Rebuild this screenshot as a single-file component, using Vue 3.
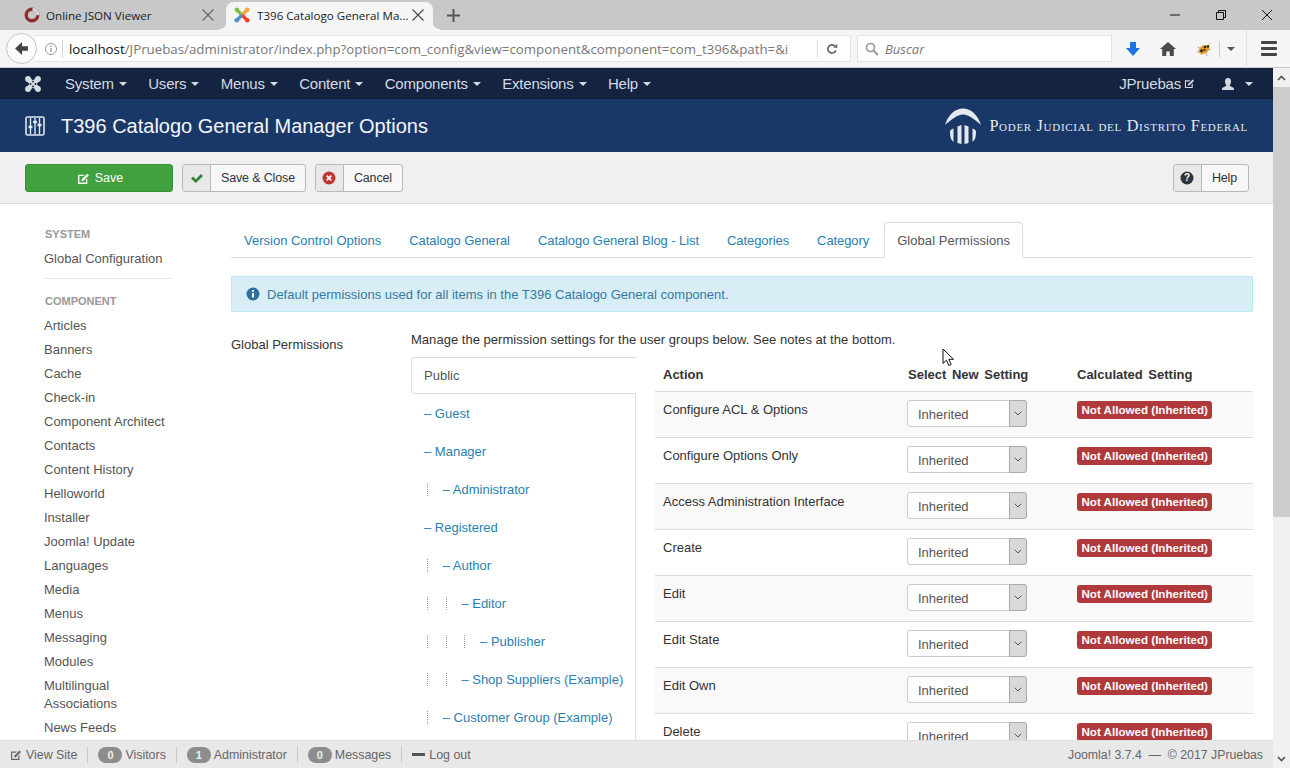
<template>
  <div class="window">
    <div class="tabstrip">
      <div class="tab">
        <svg class="favicon" viewBox="0 0 16 16"><circle cx="8" cy="8" r="5.800" fill="none" stroke="#8c2f2f" stroke-width="3.400"/><path d="M8.500 2.200a5.800 5.800 0 0 1 5.300 6" fill="none" stroke="#d6d6d6" stroke-width="3.400"/></svg>
        <span class="tab-title">Online JSON Viewer</span>
        <svg class="tab-close" viewBox="0 0 12 12"><path d="M.5.500l11 11M11.500.500l-11 11" stroke="#666" stroke-width="1.100"/></svg>
      </div>
      <div class="tab active">
        <svg class="favicon" viewBox="0 0 16 16">
          <g fill="none" stroke-width="3.200" stroke-linecap="round">
            <path d="M3 3l4 4" stroke="#7ac143"/>
            <path d="M13 3L9 7" stroke="#f9a541"/>
            <path d="M13 13L9 9" stroke="#f44321"/>
            <path d="M3 13l4-4" stroke="#5091cd"/>
          </g>
          <circle cx="2.800" cy="2.800" r="2.300" fill="#7ac143"/>
          <circle cx="13.200" cy="2.800" r="2.300" fill="#f9a541"/>
          <circle cx="13.200" cy="13.200" r="2.300" fill="#f44321"/>
          <circle cx="2.800" cy="13.200" r="2.300" fill="#5091cd"/>
        </svg>
        <span class="tab-title">T396 Catalogo General Ma...</span>
        <svg class="tab-close" viewBox="0 0 12 12"><path d="M.5.500l11 11M11.500.500l-11 11" stroke="#444" stroke-width="1.100"/></svg>
      </div>
      <svg class="newtab" viewBox="0 0 13 13"><path d="M6.500 0v13M0 6.500h13" stroke="#555" stroke-width="2"/></svg>
      <div class="winbtns">
        <svg viewBox="0 0 12 12"><path d="M1 6h10" stroke="#111" stroke-width="1"/></svg>
        <svg viewBox="0 0 12 12"><path d="M1.500 3.500h7v7h-7zM3.500 3.500v-2h7v7h-2" fill="none" stroke="#111" stroke-width="1"/></svg>
        <svg viewBox="0 0 12 12"><path d="M1 1l10 10M11 1L1 11" stroke="#111" stroke-width="1"/></svg>
      </div>
    </div>

    <div class="navbar-browser">
      <div class="backbtn">
        <svg viewBox="0 0 14 14"><path d="M7.500 1L1 7l6.500 6V9.200H13V4.800H7.500z" fill="#444"/></svg>
      </div>
      <div class="urlbar">
        <svg class="info" viewBox="0 0 14 14"><circle cx="7" cy="7" r="5.500" fill="none" stroke="#999"/><path d="M7 6v4M7 3.600v1.300" stroke="#999" stroke-width="1.300"/></svg>
        <span class="url"><b>localhost</b>/JPruebas/administrator/index.php?option=com_config&amp;view=component&amp;component=com_t396&amp;path=&amp;i</span>
        <span class="reload">
          <svg viewBox="0 0 14 14"><path d="M11.500 8.600A4.800 4.800 0 1 1 10.400 3.600" fill="none" stroke="#666" stroke-width="2"/><path d="M8.200 5.400h5V1z" fill="#666"/></svg>
        </span>
      </div>
      <div class="searchbar">
        <svg viewBox="0 0 14 14"><circle cx="5.500" cy="5.500" r="4" fill="none" stroke="#999" stroke-width="1.700"/><path d="M8.500 8.500l4.500 4.500" stroke="#999" stroke-width="2"/></svg>
        <span>Buscar</span>
      </div>
      <svg class="tb download" viewBox="0 0 16 16"><path d="M5 1h6v6h4l-7 8-7-8h4z" fill="#1b74e4"/></svg>
      <svg class="tb home" viewBox="0 0 16 16"><path d="M8 1l8 7h-2.200v7H9.700v-4.500H6.300V15H2.200V8H0z" fill="#4a4a4a"/></svg>
      <svg class="tb bug" viewBox="0 0 16 16">
        <path d="M1 6l3 1M1 11l3-1M5 14l1-2M11 15l-1-3M15 9l-3-1M14 2l-2 3" stroke="#b5b5b5" stroke-width="1"/>
        <ellipse cx="8" cy="8.500" rx="6" ry="4" transform="rotate(-30 8 8.500)" fill="#e39a2a"/>
        <circle cx="5.500" cy="9.800" r="1.500" fill="#33200f"/>
        <circle cx="8.500" cy="9" r="1.100" fill="#33200f"/>
        <circle cx="9" cy="6" r="1.300" fill="#33200f"/>
        <circle cx="12" cy="5.500" r="1.200" fill="#33200f"/>
      </svg>
      <span class="bugsep"></span>
      <span class="caret small"></span>
      <span class="hamsep"></span>
      <span class="hamburger"><i></i><i></i><i></i></span>
    </div>

    <div class="viewport">
      <div class="page">
        <nav class="topnav">
          <svg class="jlogo" viewBox="0 0 16 16">
            <path d="M3.500 3.500l9 9M12.500 3.500l-9 9" stroke="#d5dbe4" stroke-width="5"/>
            <g fill="#d5dbe4">
              <circle cx="3" cy="3" r="2.900"/><circle cx="13" cy="3" r="2.900"/>
              <circle cx="13" cy="13" r="2.900"/><circle cx="3" cy="13" r="2.900"/>
            </g>
            <g fill="#14233f">
              <circle cx="8" cy="5.600" r=".9"/><circle cx="8" cy="10.400" r=".9"/>
              <circle cx="5.600" cy="8" r=".9"/><circle cx="10.400" cy="8" r=".9"/>
            </g>
          </svg>
          <span v-for="m in menus" :key="m" class="menu">{{ m }}<span class="caret"></span></span>
          <span class="nav-right">
            <span class="menu site">JPruebas
              <svg class="ext" viewBox="0 0 12 12"><path d="M1 2.500h6L5.800 3.700H2.200v6.100h6.100V7L9.500 5.800V11H1z" fill="#d5dbe4"/><path d="M4.500 6.500l5-5 1.500 1.500-5 5-2 .5z" fill="#d5dbe4"/></svg>
            </span>
            <span class="menu user">
              <svg class="person" viewBox="0 0 14 14"><path d="M7 1c2 0 3 1.400 3 3.300S9 8 8.600 8.500c.3 1 4.400 1.500 4.400 3.500v1H1v-1c0-2 4.100-2.500 4.400-3.500C5 8 4 6.200 4 4.300S5 1 7 1z" fill="#d5dbe4"/></svg>
              <span class="caret"></span>
            </span>
          </span>
        </nav>

        <header class="titlebar">
          <svg class="opt-icon" viewBox="0 0 20 20">
            <rect x="1" y="1" width="18" height="18" rx="1.500" fill="none" stroke="#dfe7f0" stroke-width="1.600"/>
            <path d="M5.500 2v16M10 2v16M14.500 2v16" stroke="#dfe7f0" stroke-width="1.400"/>
            <path d="M3.500 11h4M8 6h4M12.500 9h4" stroke="#dfe7f0" stroke-width="2.400"/>
          </svg>
          <h1>T396 Catalogo General Manager Options</h1>
          <div class="brand">
            <svg class="brand-mark" viewBox="0 0 36 36">
              <path d="M0 17C3 7 10 .5 18 .5S33 7 36 17C30 12 24 6.500 18 6.500S6 12 0 17z" fill="#e4e9f0"/>
              <path d="M5 24c0-1.500.8-2.500 3.500-3.500v13.500C6 32 5 29 5 24zM12.500 18.500l4-1.500v19l-4-1zM19.500 17l4 1.500V35l-4 1zM27.500 20.500c2.700 1 3.500 2 3.500 3.500 0 5-1 8-3.500 10z" fill="#e4e9f0"/>
            </svg>
            <span class="brand-text">Poder Judicial del Distrito Federal</span>
          </div>
        </header>

        <div class="actions">
          <button class="btn save">
            <svg viewBox="0 0 12 12"><path d="M1 2.500h6L5.800 3.700H2.200v6.100h6.100V7L9.500 5.800V11H1z" fill="#fff"/><path d="M4.500 6.500l5-5 1.500 1.500-5 5-2 .5z" fill="#fff"/></svg>
            Save
          </button>
          <button class="btn split">
            <span class="btn-icon"><svg viewBox="0 0 14 14"><path d="M1 7.500l2-2 2.800 2.800L11 3l2 2-7.200 7z" fill="#378137"/></svg></span>
            <span class="btn-label">Save &amp; Close</span>
          </button>
          <button class="btn split">
            <span class="btn-icon"><svg viewBox="0 0 14 14"><circle cx="7" cy="7" r="6.500" fill="#bd362f"/><path d="M4.700 4.700l4.600 4.600M9.300 4.700l-4.600 4.600" stroke="#fff" stroke-width="1.800"/></svg></span>
            <span class="btn-label">Cancel</span>
          </button>
          <button class="btn split help">
            <span class="btn-icon"><svg viewBox="0 0 14 14"><circle cx="7" cy="7" r="6.500" fill="#333"/><text x="7" y="10.400" text-anchor="middle" font-size="10" font-weight="700" fill="#fff" font-family="Liberation Sans">?</text></svg></span>
            <span class="btn-label">Help</span>
          </button>
        </div>

        <div class="content">
          <aside class="sidebar">
            <div class="side-head first">System</div>
            <a class="side-link">Global Configuration</a>
            <div class="side-rule"></div>
            <div class="side-head">Component</div>
            <a v-for="c in components" :key="c" class="side-link">{{ c }}</a>
          </aside>

          <main class="main">
            <ul class="tabs">
              <li v-for="t in tabs" :key="t" :class="{ current: t === 'Global Permissions' }">{{ t }}</li>
            </ul>
            <div class="alert">
              <svg viewBox="0 0 14 14"><circle cx="7" cy="7" r="6.500" fill="#2e6f9e"/><path d="M7 6v4.600M7 3v1.700" stroke="#fff" stroke-width="2"/></svg>
              Default permissions used for all items in the T396 Catalogo General component.
            </div>

            <div class="perm">
              <div class="perm-label">Global Permissions</div>
              <div class="perm-body">
                <p class="perm-note">Manage the permission settings for the user groups below. See notes at the bottom.</p>
                <div class="perm-grid">
                  <div class="groups">
                    <div class="group-public">Public</div>
                    <ul class="group-list">
                      <li v-for="g in groups" :key="g.name">
                        <span v-for="n in g.level" :key="n" class="level"></span>
                        <a>– {{ g.name }}</a>
                      </li>
                    </ul>
                  </div>
                  <table class="rights">
                    <thead>
                      <tr><th class="c1">Action</th><th class="c2">Select New Setting</th><th>Calculated Setting</th></tr>
                    </thead>
                    <tbody>
                      <tr v-for="a in rules" :key="a">
                        <td>{{ a }}</td>
                        <td>
                          <div class="fake-select">
                            <span>Inherited</span>
                            <span class="sel-arrow"><svg viewBox="0 0 8 5"><path d="M.7.7L4 4l3.300-3.300" fill="none" stroke="#555" stroke-width="1"/></svg></span>
                          </div>
                        </td>
                        <td><span class="badge">Not Allowed (Inherited)</span></td>
                      </tr>
                    </tbody>
                  </table>
                </div>
              </div>
            </div>
          </main>
          <svg class="cursor" viewBox="0 0 12 19"><path d="M1 1v14.500l3.500-3.300 2.300 5.300 2.400-1-2.300-5.200H11.500z" fill="#fff" stroke="#111" stroke-width="1"/></svg>
        </div>

        <footer class="status">
          <span class="st first">
            <svg viewBox="0 0 12 12"><path d="M1 2.500h6L5.800 3.700H2.200v6.100h6.100V7L9.500 5.800V11H1z" fill="#666"/><path d="M4.500 6.500l5-5 1.500 1.500-5 5-2 .5z" fill="#666"/></svg>
            View Site
          </span>
          <span class="st"><i class="pill">0</i>Visitors</span>
          <span class="st"><i class="pill">1</i>Administrator</span>
          <span class="st"><i class="pill">0</i>Messages</span>
          <span class="st last"><i class="minus"></i>Log out</span>
          <span class="copy">Joomla! 3.7.4 &nbsp;— &nbsp;© 2017 JPruebas</span>
        </footer>
      </div>

      <div class="scrollbar">
        <svg viewBox="0 0 9 6"><path d="M1 5l3.500-3.500L8 5" fill="none" stroke="#555" stroke-width="1.700"/></svg>
        <div class="thumb-track"><div class="thumb"></div></div>
        <svg viewBox="0 0 9 6"><path d="M1 1l3.500 3.500L8 1" fill="none" stroke="#555" stroke-width="1.700"/></svg>
      </div>
    </div>
  </div>
</template>

<script setup>
const menus = ['System', 'Users', 'Menus', 'Content', 'Components', 'Extensions', 'Help']
const tabs = ['Version Control Options', 'Catalogo General', 'Catalogo General Blog - List', 'Categories', 'Category', 'Global Permissions']
const components = ['Articles', 'Banners', 'Cache', 'Check-in', 'Component Architect', 'Contacts', 'Content History', 'Helloworld', 'Installer', 'Joomla! Update', 'Languages', 'Media', 'Menus', 'Messaging', 'Modules', 'Multilingual Associations', 'News Feeds']
const groups = [
  { name: 'Guest', level: 0 },
  { name: 'Manager', level: 0 },
  { name: 'Administrator', level: 1 },
  { name: 'Registered', level: 0 },
  { name: 'Author', level: 1 },
  { name: 'Editor', level: 2 },
  { name: 'Publisher', level: 3 },
  { name: 'Shop Suppliers (Example)', level: 2 },
  { name: 'Customer Group (Example)', level: 1 }
]
const rules = ['Configure ACL & Options', 'Configure Options Only', 'Access Administration Interface', 'Create', 'Edit', 'Edit State', 'Edit Own', 'Delete']
</script>

<style>
html, body { margin: 0; overflow: hidden; }
</style>

<style scoped>
* { box-sizing: border-box; }
.window {
  width: 1290px;
  height: 768px;
  display: flex;
  flex-direction: column;
  overflow: hidden;
  font-family: "Liberation Sans", Arial, sans-serif;
  font-size: 13px;
  color: #333;
}

/* browser chrome */
.tabstrip {
  height: 30px;
  flex: none;
  background: #c8c8c8;
  display: flex;
  align-items: center;
  padding: 0 0 0 13px;
  font-family: "Open Sans", sans-serif;
  font-size: 11.600px;
}
.tab {
  width: 208px;
  height: 28px;
  margin-top: 2px;
  padding: 0 7px 2px 11px;
  display: flex;
  align-items: center;
  color: #222;
  position: relative;
}
.tab .favicon { margin-right: 6px; }
.tab.active {
  width: 207px;
  height: 28px;
  margin-left: 5px;
  padding: 0 9px 2px 8px;
  background: #f5f5f5;
  border-radius: 8px 8px 0 0;
}
.tab.active .favicon { margin-right: 7px; }
.tab.active::before,
.tab.active::after {
  content: "";
  position: absolute;
  bottom: 0;
  width: 7px;
  height: 8px;
}
.tab.active::before { left: -7px; background: radial-gradient(circle at 0 0, transparent 7px, #f5f5f5 7.500px); }
.tab.active::after { right: -7px; background: radial-gradient(circle at 100% 0, transparent 7px, #f5f5f5 7.500px); }
.favicon { width: 16px; height: 16px; flex: none; }
.tab-title { flex: 1; white-space: nowrap; overflow: hidden; }
.tab-close { width: 12px; height: 12px; flex: none; }
.newtab { width: 13px; height: 13px; margin-left: 14px; margin-top: 1px; }
.winbtns { margin-left: auto; display: flex; gap: 34px; padding-right: 17px; }
.winbtns svg { width: 12px; height: 12px; }

.navbar-browser {
  height: 38px;
  flex: none;
  background: #f5f5f5;
  border-bottom: 1px solid #c5cad0;
  display: flex;
  align-items: center;
  padding-left: 6px;
  position: relative;
}
.backbtn {
  width: 31px;
  height: 31px;
  border-radius: 50%;
  border: 1px solid #c4c4c4;
  background: #fbfbfb;
  display: flex;
  align-items: center;
  justify-content: center;
  position: relative;
  z-index: 1;
}
.backbtn svg { width: 15px; height: 15px; }
.urlbar {
  width: 816px;
  height: 27px;
  margin-left: -2px;
  background: #fff;
  border: 1px solid #e3e3e3;
  border-left: 0;
  display: flex;
  align-items: center;
  padding-left: 9px;
  font-family: "Open Sans", sans-serif;
  font-size: 13.300px;
  color: #777;
}
.info { width: 14px; height: 14px; flex: none; }
.url {
  margin-left: 4px;
  padding-left: 6px;
  border-left: 1px solid #d8d8d8;
  width: 744px;
  flex: none;
  white-space: nowrap;
  overflow: hidden;
  line-height: 18px;
}
.url b { font-weight: 400; color: #111; }
.reload {
  margin-left: 11px;
  height: 18px;
  border-left: 1px solid #ddd;
  flex: 1;
  display: flex;
  align-items: center;
  justify-content: center;
  padding-right: 4px;
}
.reload svg { width: 12px; height: 12px; }
.searchbar {
  width: 255px;
  height: 27px;
  margin-left: 6px;
  background: #fff;
  border: 1px solid #e3e3e3;
  display: flex;
  align-items: center;
  padding-left: 7px;
  font-family: "Open Sans", sans-serif;
  font-size: 13px;
  font-style: italic;
  color: #777;
}
.searchbar svg { width: 14px; height: 14px; margin-right: 6px; }
.tb { width: 16px; height: 16px; flex: none; }
.download { margin-left: 13px; }
.home { margin-left: 19px; }
.bug { margin-left: 20px; }
.bugsep { width: 1px; height: 16px; background: #ccc; margin-left: 7px; }
.caret.small { margin-left: 7px; border-top-color: #555; margin-right: 0; width: 0; border-left-width: 4px; border-right-width: 4px; }
.hamsep { width: 1px; height: 38px; background: #e2e2e2; margin-left: 11px; }
.hamburger { margin-left: 14px; width: 16px; display: flex; flex-direction: column; gap: 3px; }
.hamburger i { height: 3px; background: #444; border-radius: 1px; display: block; }

/* page */
.viewport { flex: 1; min-height: 0; display: flex; }
.page { flex: 1; min-width: 0; display: flex; flex-direction: column; background: #fff; }

.topnav {
  height: 31px;
  flex: none;
  background: #14233f;
  border-bottom: 1px solid #0e1a30;
  display: flex;
  align-items: center;
  padding: 1px 0 0 25px;
  font-size: 15px;
  letter-spacing: -.2px;
  color: #d5dbe4;
}
.jlogo { width: 16px; height: 16px; margin-right: 11px; }
.menu { padding: 0 8.400px 0 13px; white-space: nowrap; display: inline-flex; align-items: center; }
.caret {
  display: inline-block;
  width: 8px;
  height: 0;
  margin-left: 5px;
  border-left: 4px solid transparent;
  border-right: 4px solid transparent;
  border-top: 4px solid #d5dbe4;
}
.nav-right { margin-left: auto; display: flex; align-items: center; padding-right: 20px; }
.site { padding: 0; }
.ext { width: 11px; height: 11px; margin-left: 3px; }
.user { padding: 0 0 0 26px; }
.person { width: 14px; height: 14px; }
.user .caret { margin-left: 10px; }

.titlebar {
  height: 53px;
  flex: none;
  background: #1a3867;
  display: flex;
  align-items: center;
  padding: 1px 25px 0;
  color: #fff;
}
.opt-icon { width: 20px; height: 20px; flex: none; }
h1 { margin: 0 0 0 16px; font-size: 20px; font-weight: 400; color: #f2f5f9; }
.brand { margin-left: auto; display: flex; align-items: center; gap: 8px; }
.brand-mark { width: 36px; height: 36px; }
.brand-text {
  font-family: "Liberation Serif", serif;
  font-variant: small-caps;
  font-size: 16.200px;
  letter-spacing: .7px;
  color: #e4e9f0;
}

.actions {
  height: 52px;
  flex: none;
  background: #f0f0f0;
  border-bottom: 1px solid #dcdcdc;
  display: flex;
  align-items: center;
  padding: 1px 24px 0 25px;
  gap: 9px;
}
.btn {
  height: 28px;
  padding: 0;
  border: 1px solid #b8b8b8;
  border-radius: 3px;
  background: #f7f7f7;
  font: 12.500px "Liberation Sans", Arial, sans-serif;
  color: #333;
  display: flex;
  align-items: center;
}
.save {
  width: 148px;
  justify-content: center;
  gap: 5px;
  padding-left: 2px;
  background: #41a13f;
  border-color: #3a8f39;
  color: #fff;
}
.save svg { width: 13px; height: 13px; }
.btn-icon {
  width: 28px;
  height: 100%;
  background: #e8e8e8;
  border-right: 1px solid #b8b8b8;
  border-radius: 2px 0 0 2px;
  display: flex;
  align-items: center;
  justify-content: center;
}
.btn-icon svg { width: 14px; height: 14px; }
.btn-label { padding: 0 10px; letter-spacing: -.15px; }
.help { margin-left: auto; }
.help .btn-label { padding-right: 11px; }

.content { flex: 1; min-height: 0; display: flex; overflow: hidden; position: relative; }
.sidebar { width: 231px; flex: none; padding: 0 0 0 44px; }
.side-head {
  font-size: 11px;
  font-weight: 700;
  text-transform: uppercase;
  color: #999;
  margin: 14px 0 8px 1px;
  line-height: 16px;
}
.side-head.first { margin: 22px 0 0 1px; }
.side-head.first + .side-link { margin-top: 8px; }
.side-link { display: block; color: #555; line-height: 18px; margin-top: 6px; width: 130px; }
.side-rule { width: 127px; height: 1px; background: #e5e5e5; margin-top: 10px; }

.main { flex: 1; min-width: 0; padding: 18px 20px 0 0; }
.tabs {
  list-style: none;
  margin: 0;
  padding: 0;
  height: 36px;
  display: flex;
  gap: 2px;
  border-bottom: 1px solid #ddd;
}
.tabs li { height: 36px; padding: 0 13px; line-height: 38px; color: #2a7fb0; white-space: nowrap; letter-spacing: -.08px; }
.tabs li:first-child { letter-spacing: 0; }
.tabs li.current {
  background: #fff;
  color: #555;
  border: 1px solid #ddd;
  border-bottom-color: #fff;
  border-radius: 4px 4px 0 0;
  padding: 0 12px;
  line-height: 36px;
  letter-spacing: .05px;
}
.alert {
  margin-top: 18px;
  height: 36px;
  background: #d9edf7;
  border: 1px solid #bce8f1;
  border-radius: 2px;
  color: #37799e;
  display: flex;
  align-items: center;
  gap: 7px;
  padding-left: 14px;
}
.alert svg { width: 14px; height: 14px; }

.perm { display: flex; margin-top: 18px; }
.perm-label { width: 180px; flex: none; padding-top: 6px; line-height: 18px; color: #333; }
.perm-body { flex: 1; min-width: 0; }
.perm-note { margin: 0; line-height: 18px; height: 27px; padding-top: 1px; color: #333; letter-spacing: .03px; }
.perm-grid { display: flex; }
.groups { width: 225px; flex: none; }
.group-public {
  height: 37px;
  line-height: 35px;
  padding-left: 12px;
  border: 1px solid #ddd;
  border-right: 0;
  border-radius: 4px 0 0 4px;
  color: #555;
}
.group-list {
  list-style: none;
  margin: 0;
  padding: 0 0 0 13px;
  border-right: 1px solid #ddd;
  height: 360px;
}
.group-list li { height: 38px; display: flex; align-items: center; color: #2a7fb0; white-space: nowrap; }
.level { width: 1px; height: 13px; margin: 0 14.700px 0 3px; border-left: 1px dotted #999; flex: none; }
.rights {
  margin-left: 19px;
  width: 598px;
  flex: none;
  border-collapse: collapse;
  table-layout: fixed;
  align-self: flex-start;
}
.rights th { text-align: left; font-weight: 700; height: 34px; padding: 2px 8px 0; vertical-align: middle; border-bottom: 1px solid #ddd; word-spacing: 2px; }
.rights th.c1 { width: 244px; }
.rights th.c2 { width: 170px; padding-left: 9px; }
.rights td { height: 46px; padding: 9px 8px 0; vertical-align: top; border-bottom: 1px solid #ddd; line-height: 18px; }
.rights tbody tr:nth-child(odd) td { background: #f9f9f9; }
.fake-select {
  width: 120px;
  height: 27px;
  margin-top: -1px;
  background: #fff;
  border: 1px solid #ccc;
  border-radius: 3px;
  display: flex;
  color: #555;
  padding: 3px 0 0 10px;
  align-items: center;
}
.fake-select span:first-child { flex: 1; }
.sel-arrow {
  width: 18px;
  height: 27px;
  margin: -4px -1px -1px 0;
  background: #d9d9d9;
  border: 1px solid #aaa;
  border-radius: 0 3px 3px 0;
  display: flex;
  align-items: center;
  justify-content: center;
}
.sel-arrow svg { width: 8px; height: 5px; }
.badge {
  display: inline-block;
  height: 18px;
  line-height: 18px;
  padding: 0 4.500px;
  background: #b0393c;
  border-radius: 3px;
  color: #fff;
  font-size: 11.600px;
  font-weight: 700;
  white-space: nowrap;
  vertical-align: top;
}
.cursor { position: absolute; left: 942px; top: 144px; width: 12px; height: 19px; }

.status {
  height: 28px;
  flex: none;
  background: #e8e8e8;
  border-top: 1px solid #ddd;
  display: flex;
  align-items: center;
  padding: 0 10px;
  font-size: 12.400px;
  color: #666;
}
.st { display: inline-flex; align-items: center; height: 16px; padding: 0 10px; border-right: 1px solid #c8c8c8; white-space: nowrap; }
.st.first { padding-left: 0; }
.st.first svg { width: 12px; height: 12px; margin-right: 4px; }
.st.last { border-right: 0; }
.pill {
  width: 24px;
  height: 16px;
  border-radius: 8px;
  background: #8c8c8c;
  color: #eee;
  font-style: normal;
  font-weight: 700;
  font-size: 11px;
  text-align: center;
  line-height: 16px;
  margin-right: 3px;
}
.minus { width: 13px; height: 3px; background: #555; margin-right: 4px; }
.copy { margin-left: auto; white-space: nowrap; font-size: 12.300px; }

.scrollbar { width: 17px; flex: none; background: #f0f0f0; display: flex; flex-direction: column; align-items: center; }
.scrollbar > svg { width: 9px; height: 6px; margin: 7px 0 6px; flex: none; }
.scrollbar > svg:last-child { margin: 6px 0 6px; }
.thumb-track { flex: 1; width: 100%; }
.thumb { height: 430px; background: #cdcdcd; }
</style>
